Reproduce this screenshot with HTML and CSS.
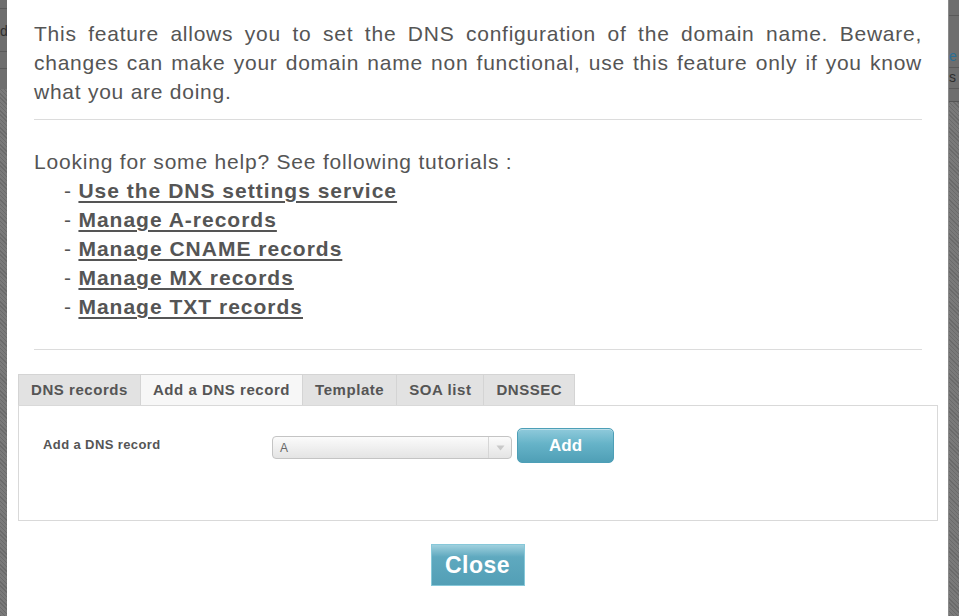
FILE: index.html
```html
<!DOCTYPE html>
<html>
<head>
<meta charset="utf-8">
<link rel="stylesheet" href="styles.css">
</head>
<body>
<div class="page">
  <div class="side side-left">
    <div class="side-top">
      <div class="cell l1"></div>
      <div class="cell l2">d</div>
      <div class="cell l3"></div>
      <div class="cell l4"></div>
    </div>
  </div>
  <div class="modal">
    <p class="intro">This feature allows you to set the DNS configuration of the domain name. Beware, changes can make your domain name non functional, use this feature only if you know what you are doing.</p>
    <hr class="sep">
    <div class="help">
      <div>Looking for some help? See following tutorials :</div>
      <ul class="links">
        <li>- <a href="#">Use the DNS settings service </a></li>
        <li>- <a href="#">Manage A-records </a></li>
        <li>- <a href="#">Manage CNAME records </a></li>
        <li>- <a href="#">Manage MX records </a></li>
        <li>- <a href="#">Manage TXT records </a></li>
      </ul>
    </div>
    <hr class="sep sep2">
    <div class="tabs">
      <div class="tab-bar">
        <div class="tab">DNS records</div>
        <div class="tab active">Add a DNS record</div>
        <div class="tab">Template</div>
        <div class="tab">SOA list</div>
        <div class="tab">DNSSEC</div>
      </div>
      <div class="panel">
        <div class="row">
          <label class="lbl">Add a DNS record</label>
          <div class="select"><span class="val">A</span><span class="arrow"><svg width="9" height="6" viewBox="0 0 9 6"><path d="M0.5 0.5 L8.5 0.5 L4.5 5.5 Z" fill="#c9c9c9"/></svg></span></div>
          <button class="btn-add">Add</button>
        </div>
      </div>
    </div>
    <div class="footer"><button class="btn-close">Close</button></div>
  </div>
  <div class="side side-right">
    <div class="side-top rt">
      <div class="rcell r1"></div>
      <div class="rcell r2">e</div>
      <div class="rcell r3">s</div>
    </div>
  </div>
</div>
</body>
</html>
```

FILE: styles.css
```css
html, body {
  margin: 0;
  padding: 0;
  height: 616px;
  overflow: hidden;
  background: #6d6d6d;
}
.page {
  display: flex;
  height: 616px;
  font-family: "Liberation Sans", Arial, sans-serif;
}
.side {
  background: repeating-linear-gradient(45deg, #6a6a6a 0 1px, #7a7a7a 1px 3px);
  overflow: hidden;
  font-size: 14px;
  color: #2e2e2e;
}
.side-left { width: 7px; }
.side-right { width: 10px; border-left: 1px solid #8a8a8a; }
.side-top { background: #6e6e6e; }
.cell { height: 17px; border-bottom: 1px solid #5a5a5a; text-align: right; line-height: 17px; }
.l1 { height: 8px; }
.l2 { height: 42px; line-height: 44px; }
.l3 { height: 16px; }
.l4 { height: 20px; border-bottom: none; }
.rt { height: 101px; border-bottom: 1px solid #555; }
.rcell { white-space: nowrap; overflow: hidden; line-height: 17px; border-bottom: 1px solid #5a5a5a; }
.r1 { height: 15px; }
.r2 { height: 51px; line-height: 80px; color: #2b6f95; border-bottom: 1px solid #5a5a5a; }
.r3 { height: 20px; line-height: 18px; }

.modal {
  flex: 1;
  background: #fff;
  padding: 19px 10px 0 11px;
  color: #555;
}
.intro {
  margin: 0 16px;
  font-size: 21px;
  letter-spacing: 0.75px;
  line-height: 29px;
  text-align: justify;
}
.sep {
  border: none;
  border-top: 1px solid #dcdcdc;
  margin: 13px 16px 0;
  height: 0;
}
.help {
  margin: 27px 16px 0;
  font-size: 21px;
  letter-spacing: 0.8px;
  line-height: 29px;
}
.links {
  list-style: none;
  margin: 0;
  padding: 0 0 0 30px;
}
.links a {
  color: #555;
  font-weight: bold;
  letter-spacing: 1px;
  text-decoration: underline;
  text-underline-offset: 3px;
}
.sep2 { margin-top: 28px; }

.tabs { margin-top: 24px; }
.tab-bar { display: flex; }
.tab {
  background: #e2e2e2;
  border: 1px solid #d4d4d4;
  border-bottom: none;
  margin-right: -1px;
  font-size: 15px;
  font-weight: bold;
  letter-spacing: 0.55px;
  color: #555;
  height: 30px;
  line-height: 30px;
  padding: 0 12px;
}
.tab.active { background: #f7f7f7; }
.panel {
  border: 1px solid #d9d9d9;
  height: 116px;
  box-sizing: border-box;
  background: #fff;
}
.row {
  display: flex;
  align-items: center;
  padding: 22px 0 0 24px;
}
.lbl {
  width: 229px;
  font-size: 13px;
  font-weight: bold;
  letter-spacing: 0.4px;
  color: #555;
  margin-top: -3px;
}
.select {
  width: 240px;
  height: 23px;
  box-sizing: border-box;
  border: 1px solid #c4c4c4;
  border-radius: 4px;
  background: linear-gradient(#fbfbfb, #e4e4e4);
  display: flex;
  align-items: center;
  font-size: 12px;
  color: #666;
  margin-top: 4px;
}
.val { flex: 1; padding-left: 7px; }
.arrow {
  width: 22px;
  height: 21px;
  border-left: 1px solid #d6d6d6;
  display: flex;
  align-items: center;
  justify-content: center;
}
.btn-add {
  margin-left: 5px;
  width: 97px;
  height: 35px;
  border: 1px solid #4d9fb7;
  border-radius: 5px;
  background: linear-gradient(#8fcadb 0%, #66b3c8 45%, #4f9fb6 100%);
  color: #fff;
  font-family: "Liberation Sans", Arial, sans-serif;
  font-size: 17px;
  font-weight: bold;
  padding: 0;
  box-shadow: inset 0 1px 0 rgba(255,255,255,0.4);
}
.footer {
  display: flex;
  justify-content: center;
  margin-top: 23px;
  padding-right: 5px;
}
.btn-close {
  width: 94px;
  height: 42px;
  border: 1px solid #87c8d9;
  background: linear-gradient(#9fd0de 0%, #5fa9bf 30%, #539fb6 100%);
  color: #fff;
  font-family: "Liberation Sans", Arial, sans-serif;
  font-size: 23px;
  font-weight: bold;
  letter-spacing: 0.5px;
  padding: 0;
  margin-left: 4px;
}
```
